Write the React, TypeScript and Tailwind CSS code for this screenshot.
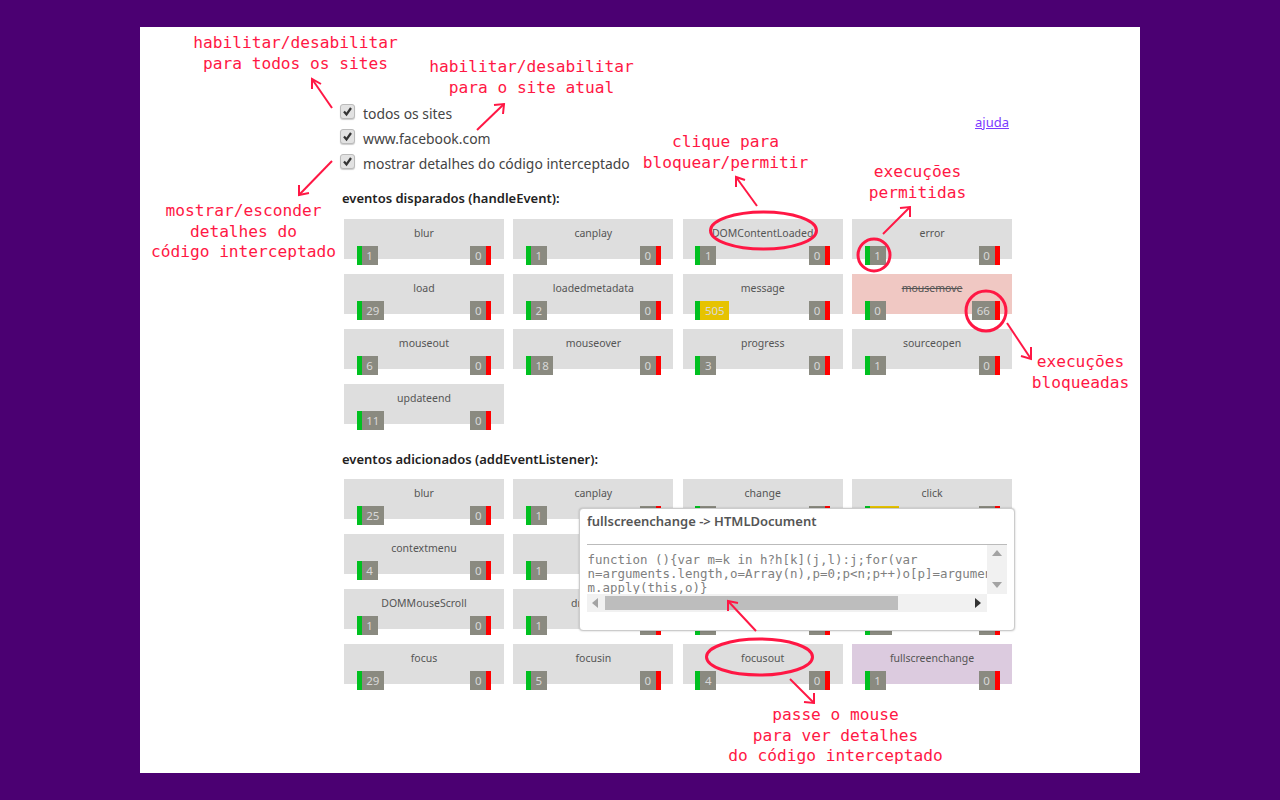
const firedEvents = [
  { name: "blur", allowed: "1", blocked: "0" },
  { name: "canplay", allowed: "1", blocked: "0" },
  { name: "DOMContentLoaded", allowed: "1", blocked: "0" },
  { name: "error", allowed: "1", blocked: "0" },
  { name: "load", allowed: "29", blocked: "0" },
  { name: "loadedmetadata", allowed: "2", blocked: "0" },
  { name: "message", allowed: "505", blocked: "0", hot: true },
  { name: "mousemove", allowed: "0", blocked: "66", off: true },
  { name: "mouseout", allowed: "6", blocked: "0" },
  { name: "mouseover", allowed: "18", blocked: "0" },
  { name: "progress", allowed: "3", blocked: "0" },
  { name: "sourceopen", allowed: "1", blocked: "0" },
  { name: "updateend", allowed: "11", blocked: "0" },
];

const addedEvents = [
  { name: "blur", allowed: "25", blocked: "0" },
  { name: "canplay", allowed: "1", blocked: "0" },
  { name: "change", allowed: "1", blocked: "0" },
  { name: "click", allowed: "126", blocked: "0", hot: true },
  { name: "contextmenu", allowed: "4", blocked: "0" },
  { name: "copy", allowed: "1", blocked: "0" },
  { name: "cut", allowed: "1", blocked: "0" },
  { name: "dblclick", allowed: "1", blocked: "0" },
  { name: "DOMMouseScroll", allowed: "1", blocked: "0" },
  { name: "dragover", allowed: "1", blocked: "0" },
  { name: "drop", allowed: "1", blocked: "0" },
  { name: "ended", allowed: "12", blocked: "0" },
  { name: "focus", allowed: "29", blocked: "0" },
  { name: "focusin", allowed: "5", blocked: "0" },
  { name: "focusout", allowed: "4", blocked: "0" },
  { name: "fullscreenchange", allowed: "1", blocked: "0", hover: true },
];

const options = ["todos os sites", "www.facebook.com", "mostrar detalhes do código interceptado"];

const notes = [
  { left: 145.5, top: 33, lines: ["habilitar/desabilitar", "para todos os sites"] },
  { left: 381.5, top: 57, lines: ["habilitar/desabilitar", "para o site atual"] },
  { left: 575.5, top: 132, lines: ["clique para", "bloquear/permitir"] },
  { left: 767.5, top: 162, lines: ["execuções", "permitidas"] },
  { left: 93.5, top: 201, lines: ["mostrar/esconder", "detalhes do", "código interceptado"] },
  { left: 930.5, top: 352, lines: ["execuções", "bloqueadas"] },
  { left: 685.5, top: 705, lines: ["passe o mouse", "para ver detalhes", "do código interceptado"] },
];

const arrows = [
  { line: "M332 108 L312 79", head: "M312 89 L312 79 L321 84" },
  { line: "M477 130 L504 104", head: "M494 105 L504 104 L503 114" },
  { line: "M332 161 L299 195", head: "M299 185 L299 195 L309 193" },
  { line: "M757 206 L736 177", head: "M736 187 L736 177 L745 180" },
  { line: "M883 234 L910 207", head: "M900 208 L910 207 L910 217" },
  { line: "M1007 323 L1031 359", head: "M1031 347 L1031 359 L1021 356" },
  { line: "M756 631 L728 601", head: "M728 611 L728 601 L738 603" },
  { line: "M790 679 L814 703", head: "M814 693 L814 703 L804 702" },
];

type Item = { name: string; allowed: string; blocked: string; hot?: boolean; off?: boolean; hover?: boolean };

function EventCard({ item }: { item: Item }) {
  const bg = item.off ? "bg-[#f0c8c3]" : item.hover ? "bg-[#dccbdf]" : "bg-[#dedede]";
  return (
    <div className={`h-10 ${bg} px-[12.5px] pt-[6px]`}>
      <p className={`h-[21px] text-center text-[10.5px] leading-4 text-[#555] ${item.off ? "line-through" : ""}`}>
        {item.name}
      </p>
      <div className="flex justify-between text-[11.5px] leading-[19px] text-[#d8d8d8]">
        <span className={`flex h-[19px] min-w-[21px] border-l-[5px] border-[#00c020] px-[4.7px] ${item.hot ? "bg-[#e6c300]" : "bg-[#8a8a80]"}`}>
          {item.allowed}
        </span>
        <span className="flex h-[19px] min-w-[21px] border-r-[5px] border-[#ff0000] bg-[#8a8a80] px-[4.7px]">
          {item.blocked}
        </span>
      </div>
    </div>
  );
}

function Triangle({ dir }: { dir: "up" | "down" | "left" | "right" }) {
  const points = {
    up: "1,8 11,8 6,2",
    down: "1,3 11,3 6,9",
    left: "8,1 8,11 2,6",
    right: "3,1 3,11 9,6",
  }[dir];
  const fill = dir === "right" ? "#333" : "#a3a3a3";
  return (
    <svg width="12" height="12" viewBox="0 0 12 12">
      <polygon points={points} fill={fill} />
    </svg>
  );
}

export default function App() {
  return (
    <div className="min-h-[800px] bg-[#4b0072] px-[140px] py-[27px] font-['Noto_Sans',sans-serif]">
      <div className="relative h-[746px] bg-white pl-[202px] pr-[128px] pt-[75px]">
        <a href="#" className="absolute right-[131px] top-[86px] text-[13px] text-[#7c3aff] underline">
          ajuda
        </a>

        <div className="-ml-[2px] flex flex-col gap-[4px] pt-[2px]">
          {options.map((option) => (
            <label key={option} className="flex h-[21px] items-center text-[13.9px] text-[#444]">
              <span className="mr-[8px] flex h-[15px] w-[15px] -translate-y-[3px] items-center justify-center rounded-[3px] border border-[#bbb] bg-[#e2e2e2] shadow-[0_1px_1px_rgba(0,0,0,0.2)]">
                <svg width="11" height="11" viewBox="0 0 11 11">
                  <path d="M2 5.5 L4.5 8.5 L9 2" fill="none" stroke="#333" strokeWidth="2.2" />
                </svg>
              </span>
              {option}
            </label>
          ))}
        </div>

        <h2 className="mt-[13px] text-[13px] font-semibold leading-[20px] text-[#222]">eventos disparados (handleEvent):</h2>
        <div className="ml-[2px] mt-[11px] grid w-[668px] grid-cols-4 gap-x-[9.5px] gap-y-[15px]">
          {firedEvents.map((item) => (
            <EventCard key={item.name} item={item} />
          ))}
        </div>

        <h2 className="mt-[25px] text-[13px] font-semibold leading-[20px] text-[#222]">eventos adicionados (addEventListener):</h2>
        <div className="ml-[2px] mt-[10px] grid w-[668px] grid-cols-4 gap-x-[9.5px] gap-y-[15px]">
          {addedEvents.map((item) => (
            <EventCard key={item.name} item={item} />
          ))}
        </div>

        <div className="absolute left-[439px] top-[481px] h-[123px] w-[436px] rounded-[4px] border border-[#ccc] bg-white pl-[7px] pr-[8px] pt-[3px] shadow-[0_0_2px_rgba(0,0,0,0.25)]">
          <p className="h-[32px] text-[13px] font-semibold leading-[18px] text-[#555]">fullscreenchange -&gt; HTMLDocument</p>
          <div className="w-[420px] border-t border-[#bbb]">
            <div className="flex h-[49px]">
              <pre className="w-[400px] overflow-hidden pl-[0.5px] pt-[8px] font-['DejaVu_Sans_Mono',monospace] text-[12.46px] leading-[14px] text-[#808080]">
                {"function (){var m=k in h?h[k](j,l):j;for(var\nn=arguments.length,o=Array(n),p=0;p<n;p++)o[p]=arguments[p];return\nm.apply(this,o)}"}
              </pre>
              <div className="flex w-[20px] flex-col items-center justify-between bg-[#f1f1f1] py-[3px]">
                <Triangle dir="up" />
                <Triangle dir="down" />
              </div>
            </div>
            <div className="flex h-[18px] w-[400px] items-center bg-[#f1f1f1]">
              <div className="flex w-[18px] justify-center"><Triangle dir="left" /></div>
              <div className="h-[14px] w-[293px] bg-[#bdbdbd]" />
              <div className="ml-auto flex w-[18px] justify-center"><Triangle dir="right" /></div>
            </div>
          </div>
        </div>

        {notes.map((note) => (
          <div
            key={note.lines[0] + note.top}
            className="absolute w-[300px] text-center font-['DejaVu_Sans_Mono',monospace] text-[16.2px] leading-[20.5px] text-[#ff1744]"
            style={{ left: note.left - 140, top: note.top - 27 }}
          >
            {note.lines.map((line) => (
              <div key={line}>{line}</div>
            ))}
          </div>
        ))}

        <svg className="pointer-events-none absolute left-[-140px] top-[-27px]" width="1280" height="800" fill="none" stroke="#ff1744">
          <ellipse cx="763.5" cy="230.5" rx="53" ry="18.5" strokeWidth="3" />
          <circle cx="874" cy="255" r="16" strokeWidth="3" />
          <circle cx="986" cy="311" r="20" strokeWidth="3" />
          <ellipse cx="759.5" cy="657" rx="53" ry="18" strokeWidth="3" />
          {arrows.map((arrow) => (
            <g key={arrow.line} strokeWidth="2">
              <path d={arrow.line} />
              <path d={arrow.head} />
            </g>
          ))}
        </svg>
      </div>
    </div>
  );
}
